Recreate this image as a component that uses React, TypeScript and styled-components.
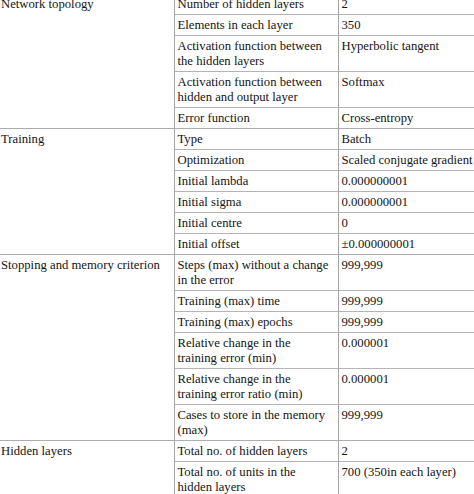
import React from "react";
import styled, { createGlobalStyle } from "styled-components";

const Global = createGlobalStyle`
  html, body { margin: 0; padding: 0; background: #fff; overflow: hidden; }
  body { font-family: "Liberation Serif", "Times New Roman", serif; color: #151515; }
`;

const Table = styled.table`
  border-collapse: collapse;
  table-layout: fixed;
  width: 520px;
  margin-top: -6px;
  font-family: "Liberation Serif", "Times New Roman", serif;
  font-size: 12.7px;
  line-height: 15px;
  color: #151515;
`;

const GroupBody = styled.tbody<{ $last?: boolean }>`
  border-bottom: ${(p) => (p.$last ? "none" : "1px solid #adadad")};
`;

const LabelCell = styled.td`
  vertical-align: top;
  padding: 3px 0 2px 1px;
  border-right: 1px solid #a4a4a4;
  white-space: nowrap;
`;

const KeyCell = styled.td<{ $first?: boolean }>`
  vertical-align: top;
  padding: 3px 7px 2px 3px;
  border-right: 1px solid #a4a4a4;
  border-top: ${(p) => (p.$first ? "none" : "1px solid #b4b4b4")};
`;

const ValueCell = styled.td<{ $first?: boolean }>`
  vertical-align: top;
  padding: 3px 3px 2px 3px;
  white-space: nowrap;
  border-top: ${(p) => (p.$first ? "none" : "1px solid #b4b4b4")};
`;

type Row = [string, string];
type Group = { label: string; rows: Row[] };

const groups: Group[] = [
  {
    label: "Network topology",
    rows: [
      ["Number of hidden layers", "2"],
      ["Elements in each layer", "350"],
      ["Activation function between the hidden layers", "Hyperbolic tangent"],
      ["Activation function between hidden and output layer", "Softmax"],
      ["Error function", "Cross-entropy"],
    ],
  },
  {
    label: "Training",
    rows: [
      ["Type", "Batch"],
      ["Optimization", "Scaled conjugate gradient"],
      ["Initial lambda", "0.000000001"],
      ["Initial sigma", "0.000000001"],
      ["Initial centre", "0"],
      ["Initial offset", "\u00b10.000000001"],
    ],
  },
  {
    label: "Stopping and memory criterion",
    rows: [
      ["Steps (max) without a change in the error", "999,999"],
      ["Training (max) time", "999,999"],
      ["Training (max) epochs", "999,999"],
      ["Relative change in the training error (min)", "0.000001"],
      ["Relative change in the training error ratio (min)", "0.000001"],
      ["Cases to store in the memory (max)", "999,999"],
    ],
  },
  {
    label: "Hidden layers",
    rows: [
      ["Total no. of hidden layers", "2"],
      ["Total no. of units in the hidden layers", "700 (350in each layer)"],
    ],
  },
];

export default function App() {
  return (
    <>
      <Global />
      <Table>
        <colgroup>
          <col style={{ width: 174 }} />
          <col style={{ width: 164 }} />
          <col />
        </colgroup>
        {groups.map((g, gi) => (
          <GroupBody key={g.label} $last={gi === groups.length - 1}>
            {g.rows.map((r, ri) => (
              <tr key={r[0]}>
                {ri === 0 && <LabelCell rowSpan={g.rows.length}>{g.label}</LabelCell>}
                <KeyCell $first={ri === 0}>{r[0]}</KeyCell>
                <ValueCell $first={ri === 0}>{r[1]}</ValueCell>
              </tr>
            ))}
          </GroupBody>
        ))}
      </Table>
    </>
  );
}
